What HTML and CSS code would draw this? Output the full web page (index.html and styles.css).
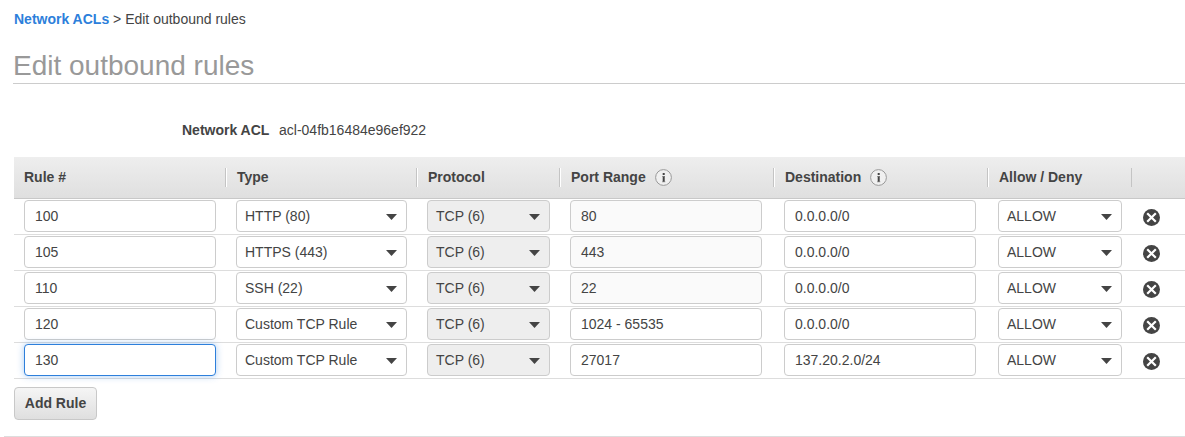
FILE: index.html
```html
<!DOCTYPE html>
<html lang="en">
<head>
<meta charset="utf-8">
<title>Edit outbound rules</title>
<link rel="stylesheet" href="styles.css">
</head>
<body>
<nav class="breadcrumb"><a class="crumb-link">Network ACLs</a> &gt; Edit outbound rules</nav>
<h1 class="title">Edit outbound rules</h1>
<div class="acl"><span class="acl-label">Network ACL</span><span class="acl-id">acl-04fb16484e96ef922</span></div>
<div class="table" id="rules">
  <div class="row head">
    <div class="th"><span class="th-text">Rule #</span></div>
    <div class="th"><span class="th-text">Type</span></div>
    <div class="th"><span class="th-text">Protocol</span></div>
    <div class="th"><span class="th-text">Port Range</span><svg class="info" viewBox="0 0 17 17"><circle cx="8.5" cy="8.5" r="7.9"/><path d="M8.7 4v2M8.7 7v6"/><path class="serif" d="M7 7.5h2M7 12.8h3.4"/></svg></div>
    <div class="th"><span class="th-text">Destination</span><svg class="info" viewBox="0 0 17 17"><circle cx="8.5" cy="8.5" r="7.9"/><path d="M8.7 4v2M8.7 7v6"/><path class="serif" d="M7 7.5h2M7 12.8h3.4"/></svg></div>
    <div class="th last"><span class="th-text">Allow / Deny</span></div>
  </div>
</div>
<button class="add">Add Rule</button>
<div class="footer-line"></div>
<script src="rules.js"></script>
</body>
</html>
```
FILE: styles.css
```css
* { box-sizing: border-box; }
body {
  margin: 0;
  height: 437px;
  overflow: hidden;
  background: #fff;
  color: #444;
  font: 14px/18px "Liberation Sans", Arial, sans-serif;
}
.breadcrumb { padding: 10px 0 0 14px; }
.crumb-link { color: #2d7fdb; font-weight: bold; }
.title {
  margin: 18px 0 0 13px;
  height: 38px;
  border-bottom: 1px solid #ccc;
  color: #999;
  font-size: 28px;
  font-weight: normal;
  line-height: 40px;
}
.acl { display: flex; margin: 37px 0 0 182px; }
.acl-label { width: 97px; font-weight: bold; }
.table { margin: 18px 0 0 14px; }
.row {
  display: grid;
  grid-template-columns: 212px 191px 143px 214px 214px 144px 1fr;
  height: 36px;
  border-bottom: 1px solid #ddd;
}
.head {
  height: 42px;
  align-items: center;
  border-bottom-color: #c8c8c8;
  background: linear-gradient(#eee, #dfdfdf);
}
.th {
  display: flex;
  align-items: center;
  height: 19px;
  padding-left: 11px;
  border-right: 1px solid #c4c4c4;
  box-shadow: 1px 0 #fff;
  font-weight: bold;
}
.th:first-child { padding-left: 10px; }
.th-text { padding-bottom: 2px; }
.last { box-shadow: none; }
.info { width: 17px; height: 17px; margin-left: 9px; }
.info circle { fill: #f0f0f0; stroke: #999; }
.info path { fill: none; stroke: #444; stroke-width: 2; }
.info .serif { stroke: #888; stroke-width: .7; }
.cell { padding: 1px 0 0 10px; }
.field {
  display: flex;
  align-items: center;
  justify-content: space-between;
  height: 32px;
  border: 1px solid #ccc;
  border-radius: 4px;
  background: #fff;
  padding: 0 9px 0 10px;
}
.select { padding-left: 8px; }
.w-192 { width: 192px; }
.w-171 { width: 171px; }
.w-123 { width: 123px; }
.w-124 { width: 124px; }
.disabled { background: #eee; }
.readonly { background: #fafafa; }
.focused { border-color: #2d7fdb; box-shadow: 0 0 7px rgba(60, 140, 230, .45); }
.arrow { width: 11px; height: 6px; margin-top: 2px; fill: #444; }
.remove { display: block; width: 17px; height: 17px; margin: 9px 0 0 1px; }
.remove circle { fill: #444; }
.remove path { stroke: #fff; stroke-width: 2.2; }
.add {
  display: block;
  width: 83px;
  height: 33px;
  margin: 8px 0 0 14px;
  padding: 0 0 2px;
  border: 1px solid #c8c8c8;
  border-radius: 4px;
  background: linear-gradient(#f5f5f5, #dfdfdf);
  color: #444;
  font: bold 14px/18px "Liberation Sans", Arial, sans-serif;
}
.footer-line { margin: 16px 0 0 4px; border-top: 1px solid #ddd; }
```
FILE: rules.js
```js
const rules = [
  ["100", "HTTP (80)", "80", "0.0.0.0/0", true],
  ["105", "HTTPS (443)", "443", "0.0.0.0/0", true],
  ["110", "SSH (22)", "22", "0.0.0.0/0", true],
  ["120", "Custom TCP Rule", "1024 - 65535", "0.0.0.0/0", false],
  ["130", "Custom TCP Rule", "27017", "137.20.2.0/24", false]
];
const arrow = '<svg class="arrow" viewBox="0 0 11 6"><path d="M0 0h11L5.5 6z"/></svg>';
const input = (text, cls) => `<div class="cell"><div class="field w-192 ${cls || ""}">${text}</div></div>`;
const select = (text, cls) => `<div class="cell"><div class="field select ${cls}">${text}${arrow}</div></div>`;
const table = document.getElementById("rules");
rules.forEach(([num, type, port, dest, locked], i) => {
  const row = document.createElement("div");
  row.className = "row";
  row.innerHTML =
    input(num, i === rules.length - 1 ? "focused" : "") +
    select(type, "w-171") +
    select("TCP (6)", "w-123 disabled") +
    input(port, locked ? "readonly" : "") +
    input(dest) +
    select("ALLOW", "w-124") +
    '<div class="cell"><svg class="remove" viewBox="0 0 17 17"><circle cx="8.5" cy="8.5" r="8.5"/><path d="M4.2 4.2l8.6 8.6M12.8 4.2l-8.6 8.6"/></svg></div>';
  table.appendChild(row);
});
```
